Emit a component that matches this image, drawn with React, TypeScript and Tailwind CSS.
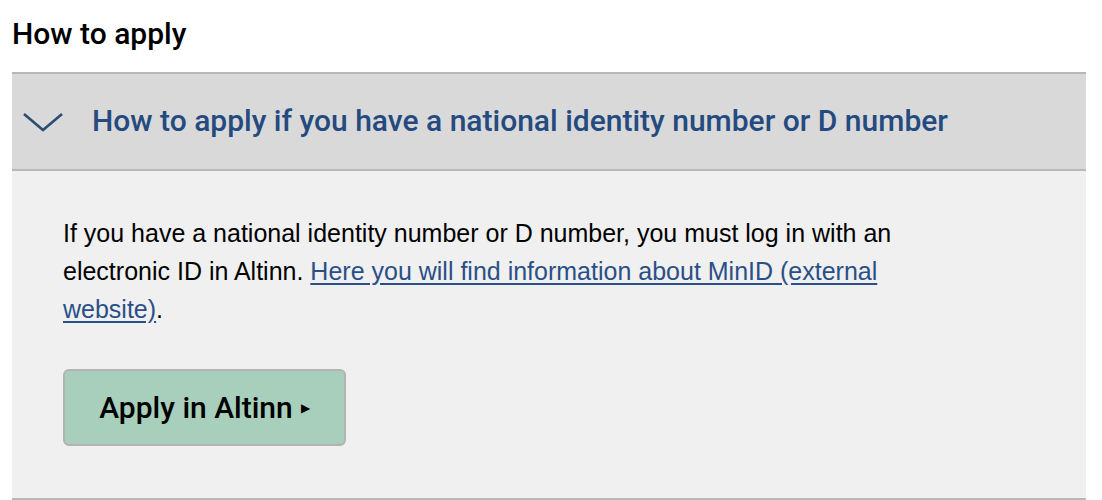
export default function App() {
  return (
    <div className="min-h-[500px] w-full bg-white pt-[13px]">
      <h2 className="px-3 font-['Roboto',sans-serif] text-[30px] leading-[42px] font-medium text-black">
        How to apply
      </h2>
      <div className="mt-[17px] mr-4 ml-3 border-t-2 border-b-[3px] border-[#b8b8b8]">
        <button className="flex h-[97px] w-full items-center border-b-2 border-[#b8b8b8] bg-[#d9d9d9] text-left">
          <svg
            width="42"
            height="22"
            viewBox="0 0 42 22"
            className="mr-[28px] ml-[10px]"
            fill="none"
          >
            <path
              d="M2 3 L21 19 L40 3"
              stroke="#2c4d72"
              strokeWidth="2.6"
              strokeLinejoin="miter"
            />
          </svg>
          <span className="-mt-[2px] font-['Roboto',sans-serif] text-[30px] font-medium text-[#244a80]">
            How to apply if you have a national identity number or D number
          </span>
        </button>
        <div className="bg-[#f0f0f0] px-[51px] pt-[43px] pb-[52px]">
          <p className="max-w-[860px] font-['Liberation_Sans',Arial,sans-serif] text-[25px] leading-[38px] text-black">
            If you have a national identity number or D number, you must log in with an electronic ID in Altinn.{" "}
            <a href="#" className="text-[#2a4f86] underline underline-offset-[3px]">
              Here you will find information about MinID (external website)
            </a>
            .
          </p>
          <a
            href="#"
            className="mt-[41px] flex h-[77px] w-[283px] items-center justify-center rounded-[6px] border-2 border-[#b3b3b3] bg-[#a7cfbb] font-['Roboto',sans-serif] text-[30px] font-medium text-black"
          >
            Apply in Altinn
            <span className="ml-[8px] text-[12px]">▶</span>
          </a>
        </div>
      </div>
    </div>
  );
}
